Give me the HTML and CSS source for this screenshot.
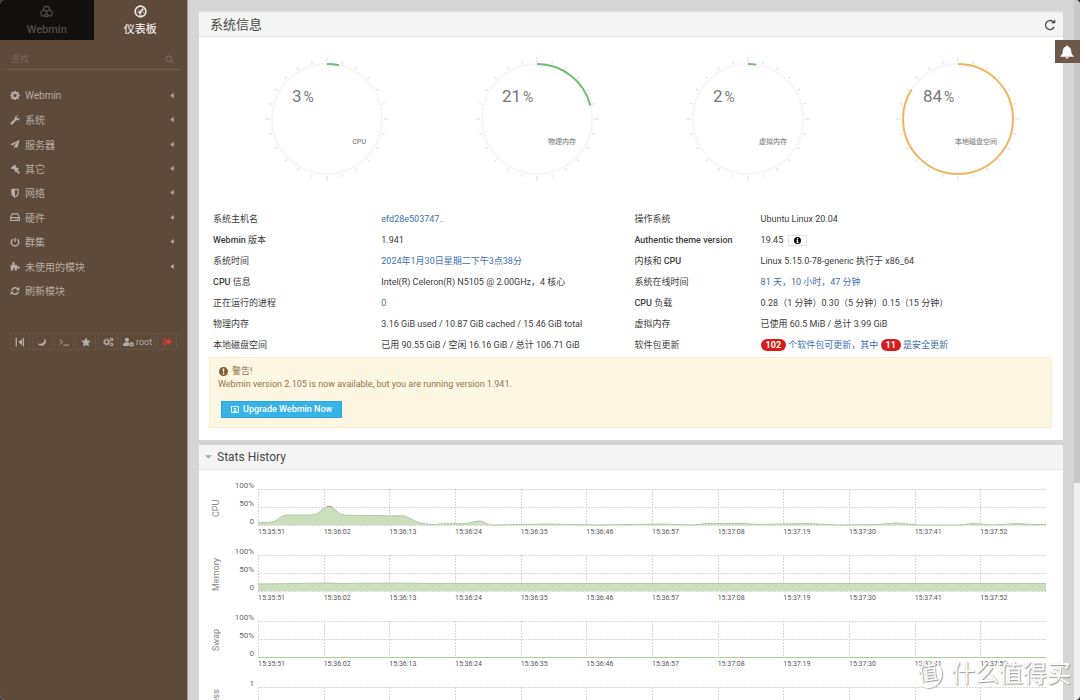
FILE: index.html
```html
<!DOCTYPE html>
<html lang="zh-CN">
<head>
<meta charset="utf-8">
<title>Webmin</title>
<link rel="stylesheet" href="styles.css">
</head>
<body>
<svg class="defs" aria-hidden="true">
  <defs>
    <symbol id="caret" viewBox="0 0 4 6"><path d="M4 0v6L0 3z"/></symbol>
    <symbol id="dial" viewBox="-63 -63 126 126">
      <circle r="55" fill="none" stroke="#f6f6f6" stroke-width="2"/>
      <g stroke="#ddd" stroke-width="1">
        <g id="quarter">
          <path d="M0-57v-5"/>
          <path d="M0-57v-3" transform="rotate(15)"/><path d="M0-57v-3" transform="rotate(30)"/>
          <path d="M0-57v-3" transform="rotate(45)"/><path d="M0-57v-3" transform="rotate(60)"/>
          <path d="M0-57v-3" transform="rotate(75)"/>
        </g>
        <use href="#quarter" transform="rotate(90)"/>
        <use href="#quarter" transform="rotate(180)"/>
        <use href="#quarter" transform="rotate(270)"/>
      </g>
    </symbol>
    <g id="grid" fill="none" stroke="#d6d6d6" stroke-dasharray="2 1">
      <path d="M0 .5h788M0 18.5h788M0 36.5h788"/>
      <path d="M.5 0v36M66.500 0v36M131.500 0v36M197.500 0v36M263.500 0v36M328.500 0v36M394.500 0v36M460.500 0v36M525.500 0v36M591.500 0v36M657.500 0v36M722.500 0v36"/>
    </g>
  </defs>
</svg>
<div class="app">
  <aside class="sidebar">
    <div class="tabs">
      <a class="tab" href="#webmin">
        <svg class="tab-icon" viewBox="0 0 16 16" fill="none" stroke="currentColor" stroke-width="1.500"><path d="M5 6C3.500 2.500 6 .8 8 2.500 10 .8 12.500 2.500 11 6M5 6C2 6 .3 9.500 1.500 12c.8 2 3.500 2 4.500.5M11 6c3 0 4.700 3.500 3.500 6-.8 2-3.500 2-4.500.5M6 12.500c.3 2.300 3.700 2.300 4 0M5 6l3 2 3-2M8 8v2M8 10l-2 2.500M8 10l2 2.500"/></svg>
        <span>Webmin</span>
      </a>
      <a class="tab active" href="#dashboard">
        <svg class="tab-icon" viewBox="0 0 16 16" fill="none" stroke="currentColor"><circle cx="8" cy="8" r="6.600" stroke-width="2"/><path d="M7.500 8.700L11.500 4.500" stroke-width="2"/><circle cx="7.300" cy="9" r="1.500" fill="currentColor"/><path d="M3.500 8.500h1M5 5l.7.7M11 9h1.500M6 12.500h4" stroke-width="1.200"/></svg>
        <span>仪表板</span>
      </a>
    </div>
    <label class="search">
      <input type="search" placeholder="查找" aria-label="查找">
      <svg class="icon" viewBox="0 0 16 16" fill="none" stroke="currentColor" stroke-width="1.700"><circle cx="7" cy="7" r="5.300"/><path d="M11 11l4 4"/></svg>
    </label>
    <nav class="menu">
      <a href="#1"><svg class="icon" viewBox="0 0 16 16"><path fill-rule="evenodd" d="M6.800 1h2.400l.4 2 1.400.6 1.700-1.200 1.700 1.700-1.200 1.700.6 1.400 2 .4v2.400l-2 .4-.6 1.200 1.200 1.700-1.700 1.700-1.700-1.200-1.400.6-.4 2H6.800l-.4-2-1.400-.6-1.700 1.200-1.700-1.700 1.200-1.700L2.200 10.400l-2-.4V7.600l2-.4.6-1.400-1.200-1.700 1.700-1.700L5 3.600 6.400 3zM8 6a2.600 2.600 0 100 5.200A2.600 2.600 0 008 6z"/></svg><span>Webmin</span><svg class="caret"><use href="#caret"/></svg></a>
      <a href="#2"><svg class="icon" viewBox="0 0 16 16"><path d="M15.300 4.200l-2.700 1.500-1.900-1.100V2.500L13.400 1C10.500-.2 7 2 7.700 5.800L1 12.200c-1.800 2 .9 4.400 2.800 2.800l6.400-6.700c3.600.8 5.900-1.600 5.100-4.100z"/></svg><span>系统</span><svg class="caret"><use href="#caret"/></svg></a>
      <a href="#3"><svg class="icon" viewBox="0 0 16 16"><path d="M15.500 1L.5 8.500l4 2L12 4.500l-5.500 7V15l2.300-2.400 3.200 1.400z"/></svg><span>服务器</span><svg class="caret"><use href="#caret"/></svg></a>
      <a href="#4"><svg class="icon" viewBox="0 0 16 16"><path d="M7.500.8l1.700 1.700-.5 1.200 3 3 1.200-.5 1.600 1.600-5.500 5.500-1.600-1.600.5-1.200-3-3-1.200.5L.8 6.800zM12 10l4 3.600-2.300 2.300L10 12z"/></svg><span>其它</span><svg class="caret"><use href="#caret"/></svg></a>
      <a href="#5"><svg class="icon" viewBox="0 0 16 16"><path fill-rule="evenodd" d="M2 1h12v7c0 3.500-2.500 5.700-6 7.500C4.500 13.700 2 11.500 2 8zm6 2v10c2.500-1.400 4-3 4-5V3z"/></svg><span>网络</span><svg class="caret"><use href="#caret"/></svg></a>
      <a href="#6"><svg class="icon" viewBox="0 0 16 16" fill="none" stroke="currentColor" stroke-width="1.800"><path d="M1 9l2.500-6h9L15 9v4.500H1zM1 9h14M9 11.300h1.200M11.800 11.300H13"/></svg><span>硬件</span><svg class="caret"><use href="#caret"/></svg></a>
      <a href="#7"><svg class="icon" viewBox="0 0 16 16" fill="none" stroke="currentColor" stroke-width="2.200"><path d="M4.500 3.500a6 6 0 107 0M8 1v7"/></svg><span>群集</span><svg class="caret"><use href="#caret"/></svg></a>
      <a href="#8"><svg class="icon" viewBox="0 0 16 16"><path d="M1 6h3.500C3 2.500 4 1 5.500 1S8 2.500 6.800 6H11v3.300c1.500-1 4.500-1.300 4.500 1.200s-3 2.200-4.500 1.200V15H7.500c1-2.500.3-3.500-1-3.500s-2 1-1 3.500H1z"/></svg><span>未使用的模块</span><svg class="caret"><use href="#caret"/></svg></a>
      <a href="#9"><svg class="icon" viewBox="0 0 16 16"><path d="M1.500 7a6.500 6.500 0 0111-3.500L15 1.500V7H9.500l1.700-1.700A4 4 0 004.200 7zM14.500 9a6.500 6.500 0 01-11 3.500L1 14.500V9h5.500l-1.700 1.700A4 4 0 0011.800 9z"/></svg><span>刷新模块</span></a>
    </nav>
    <div class="tools">
      <button aria-label="收起"><svg class="icon" viewBox="0 0 16 16"><path d="M1 1h2v14H1zM12.500 1h2v14h-2zM11.500 3v10L5 8z"/></svg></button>
      <button aria-label="夜间"><svg class="icon" viewBox="0 0 16 16"><path d="M12 2c5 5 1 12-5 12-3 0-5-1.500-6-3.500 7 2.500 11.500-2 11-8.500z"/></svg></button>
      <button aria-label="终端"><svg class="icon" viewBox="0 0 16 16" fill="none" stroke="currentColor" stroke-width="1.500"><path d="M1 4l4.500 4L1 12M7 13h9"/></svg></button>
      <button aria-label="收藏"><svg class="icon" viewBox="0 0 16 16"><path d="M8 .5l2.300 4.900 5.300.7-3.900 3.700 1 5.400L8 12.600l-4.700 2.600 1-5.400L.4 6.100l5.300-.7z"/></svg></button>
      <button aria-label="设置"><svg class="icon wide" viewBox="0 0 18 16" fill="none" stroke="currentColor"><circle cx="6" cy="8" r="3.500" stroke-width="2.400"/><circle cx="6" cy="8" r="5.200" stroke-width="1.500" stroke-dasharray="2 2.080"/><circle cx="14" cy="4" r="2" stroke-width="1.800"/><circle cx="14" cy="12" r="2" stroke-width="1.800"/></svg></button>
      <button><svg class="icon wide" viewBox="0 0 18 16"><circle cx="6.500" cy="4.500" r="3.500"/><path d="M0 14c0-4 2-5.500 6.500-5.500 2 0 3 .3 3.800 1-1 1.500-1 3.500 0 5H0z"/><path fill-rule="evenodd" d="M14 8a3.800 3.800 0 100 7.600A3.800 3.800 0 0014 8zm0 2.500a1.300 1.300 0 110 2.600 1.300 1.300 0 010-2.600z"/></svg>root</button>
      <button class="logout" aria-label="退出"><svg class="icon" viewBox="0 0 16 16"><path d="M6 2v2H3v8h3v2H2.500Q1 14 1 12.500v-9Q1 2 2.500 2zM9 2L16 8 9 14V11H5V5h4z"/></svg></button>
    </div>
  </aside>

  <main class="content">
    <section class="panel info">
      <header class="panel-head top">
        <h1>系统信息</h1>
        <button class="refresh" aria-label="刷新"><svg viewBox="0 0 16 16" fill="none" stroke="currentColor" stroke-width="1.700"><path d="M13.500 10.500A6 6 0 1112 3.500"/><path d="M10.300 5.300h4.200V1.200z" fill="currentColor" stroke-width="1"/></svg></button>
      </header>
      <div class="dials">
        <svg class="dial" viewBox="-63 -63 126 126"><use href="#dial" x="-63" y="-63" width="126" height="126"/><circle class="arc green" r="55" pathLength="100" stroke-dasharray="3.500 100"/><text class="num" x="-35" y="-17">3<tspan class="pct" dx="2">%</tspan></text><text class="cap" x="39" y="25">CPU</text></svg>
        <svg class="dial" viewBox="-63 -63 126 126"><use href="#dial" x="-63" y="-63" width="126" height="126"/><circle class="arc green" r="55" pathLength="100" stroke-dasharray="21 100"/><text class="num" x="-35" y="-17">21<tspan class="pct" dx="2">%</tspan></text><text class="cap" x="39" y="25">物理内存</text></svg>
        <svg class="dial" viewBox="-63 -63 126 126"><use href="#dial" x="-63" y="-63" width="126" height="126"/><circle class="arc green" r="55" pathLength="100" stroke-dasharray="2.400 100"/><text class="num" x="-35" y="-17">2<tspan class="pct" dx="2">%</tspan></text><text class="cap" x="39" y="25">虚拟内存</text></svg>
        <svg class="dial" viewBox="-63 -63 126 126"><use href="#dial" x="-63" y="-63" width="126" height="126"/><circle class="arc orange" r="55" pathLength="100" stroke-dasharray="84 100"/><text class="num" x="-35" y="-17">84<tspan class="pct" dx="2">%</tspan></text><text class="cap" x="39" y="25">本地磁盘空间</text></svg>
      </div>
      <table class="facts">
        <tr><th>系统主机名</th><td><a href="#host">efd28e503747..</a></td><th>操作系统</th><td>Ubuntu Linux 20.04</td></tr>
        <tr><th><b>Webmin</b> 版本</th><td>1.941</td><th><b>Authentic theme version</b></th><td>19.45 <button class="tip" aria-label="信息"><svg viewBox="0 0 16 16"><path fill-rule="evenodd" d="M8 0a8 8 0 100 16A8 8 0 008 0zM6.500 2.500h3v2.700h-3zM5.500 6.500h4v5h1.200v2H5.500v-2h1.200v-3H5.500z"/></svg></button></td></tr>
        <tr><th>系统时间</th><td><a href="#time">2024年1月30日星期二下午3点38分</a></td><th>内核和 <b>CPU</b></th><td>Linux 5.15.0-78-generic 执行于 x86_64</td></tr>
        <tr><th><b>CPU</b> 信息</th><td>Intel(R) Celeron(R) N5105 @ 2.00GHz，4 核心</td><th>系统在线时间</th><td><a href="#up">81 天，10 小时，47 分钟</a></td></tr>
        <tr><th>正在运行的进程</th><td><a href="#proc">0</a></td><th><b>CPU</b> 负载</th><td>0.28（1 分钟）0.30（5 分钟）0.15（15 分钟）</td></tr>
        <tr><th>物理内存</th><td>3.16 GiB used / 10.87 GiB cached / 15.46 GiB total</td><th>虚拟内存</th><td>已使用 60.5 MiB / 总计 3.99 GiB</td></tr>
        <tr><th>本地磁盘空间</th><td>已用 90.55 GiB / 空闲 16.16 GiB / 总计 106.71 GiB</td><th>软件包更新</th><td><a href="#pkg"><span class="badge">102</span> 个软件包可更新，其中 <span class="badge">11</span> 是安全更新</a></td></tr>
      </table>
      <div class="alert">
        <p class="alert-title"><svg viewBox="0 0 16 16"><path fill-rule="evenodd" d="M8 0a8 8 0 100 16A8 8 0 008 0zM6.500 2.500h3L9 9.500H7zM6.700 10.800h2.600v2.500H6.700z"/></svg>警告!</p>
        <p>Webmin version 2.105 is now available, but you are running version 1.941.</p>
        <button class="upgrade"><svg viewBox="0 0 16 14" fill="none" stroke="currentColor" stroke-width="1.800"><path d="M1 1h14v12H1zM8 11V4M5.500 6.500L8 4l2.500 2.500M4 10.500h8"/></svg>Upgrade Webmin Now</button>
      </div>
    </section>

    <section class="panel stats">
      <header class="panel-head"><svg class="fold" viewBox="0 0 8 4"><path d="M0 0h8L4 4z"/></svg><h2>Stats History</h2></header>
      <div class="charts">
        <div class="chart">
          <div class="name"><span>CPU</span></div>
          <div class="scale"><span>100%</span><span>50%</span><span>0</span></div>
          <div class="plot">
            <svg viewBox="0 0 788 37" preserveAspectRatio="none">
              <path class="area" d="M0 36V34C6 33 10 34 14 33C20 32 22 26 29 26H54C62 26 64 17.500 71 17.500C78 17.500 78 25 86 26C100 27 120 26 130 27C140 26.500 146 27 147 27C154 29 156 35 176 35.500C190 34 200 35 206 34.500C213 34 216 32 222 32C228 33 228 36 236 36L290 35L340 36L403 35L435 36L450 34.500L485 34.500L500 35.500L550 34.500L580 36L620 35.500L638 34L660 36L700 36L715 34.500L735 36L758 34.500L775 35.500H788V36z"/>
              <use href="#grid"/>
              <path class="line" d="M0 34C6 33 10 34 14 33C20 32 22 26 29 26H54C62 26 64 17.500 71 17.500C78 17.500 78 25 86 26C100 27 120 26 130 27C140 26.500 146 27 147 27C154 29 156 35 176 35.500C190 34 200 35 206 34.500C213 34 216 32 222 32C228 33 228 36 236 36L290 35L340 36L403 35L435 36L450 34.500L485 34.500L500 35.500L550 34.500L580 36L620 35.500L638 34L660 36L700 36L715 34.500L735 36L758 34.500L775 35.500H788"/>
              <path class="peak" d="M69 17.500h5"/>
            </svg>
            <div class="times"><span>15:35:51</span><span>15:36:02</span><span>15:36:13</span><span>15:36:24</span><span>15:36:35</span><span>15:36:46</span><span>15:36:57</span><span>15:37:08</span><span>15:37:19</span><span>15:37:30</span><span>15:37:41</span><span>15:37:52</span></div>
          </div>
        </div>
        <div class="chart">
          <div class="name"><span>Memory</span></div>
          <div class="scale"><span>100%</span><span>50%</span><span>0</span></div>
          <div class="plot">
            <svg viewBox="0 0 788 37" preserveAspectRatio="none">
              <path class="area" d="M0 36V29L70 28L86 28.500L132 28L180 28.500H788V36z"/>
              <use href="#grid"/>
              <path class="line" d="M0 29L70 28L86 28.500L132 28L180 28.500H788"/>
            </svg>
            <div class="times"><span>15:35:51</span><span>15:36:02</span><span>15:36:13</span><span>15:36:24</span><span>15:36:35</span><span>15:36:46</span><span>15:36:57</span><span>15:37:08</span><span>15:37:19</span><span>15:37:30</span><span>15:37:41</span><span>15:37:52</span></div>
          </div>
        </div>
        <div class="chart">
          <div class="name"><span>Swap</span></div>
          <div class="scale"><span>100%</span><span>50%</span><span>0</span></div>
          <div class="plot">
            <svg viewBox="0 0 788 37" preserveAspectRatio="none">
              <use href="#grid"/>
              <path class="line" d="M0 36.500H788"/>
            </svg>
            <div class="times"><span>15:35:51</span><span>15:36:02</span><span>15:36:13</span><span>15:36:24</span><span>15:36:35</span><span>15:36:46</span><span>15:36:57</span><span>15:37:08</span><span>15:37:19</span><span>15:37:30</span><span>15:37:41</span><span>15:37:52</span></div>
          </div>
        </div>
        <div class="chart">
          <div class="name"><span>Process</span></div>
          <div class="scale"><span>1</span></div>
          <div class="plot">
            <svg viewBox="0 0 788 37" preserveAspectRatio="none"><use href="#grid"/></svg>
          </div>
        </div>
      </div>
    </section>
  </main>

  <button class="bell" aria-label="通知"><svg viewBox="0 0 16 16"><path d="M8 .5c.8 0 1.200.5 1.200 1.200C12 2.500 12.800 5 13 8c.1 2 1 3.300 2.500 4.500v.8H.5v-.8C2 11.300 2.900 10 3 8c.2-3 1-5.500 3.800-6.300C6.800 1 7.200.5 8 .5zM6 14h4c-.3 2-3.700 2-4 0z"/></svg></button>
  <div class="scrollbar"><div class="thumb"></div></div>
  <div class="watermark"><span class="seal">值</span><span>什么值得买</span></div>
</div>
</body>
</html>
```

FILE: styles.css
```css
* { box-sizing: border-box; }

html { background: #3a3a3a; }

body {
  margin: 0;
  font-family: Roboto, "Noto Sans CJK SC", sans-serif;
  font-size: 9px;
  color: #3c3c3c;
}

a { color: inherit; text-decoration: none; }
button { font: inherit; color: inherit; cursor: pointer; }
h1, h2, p { margin: 0; font-weight: 400; }
svg { display: block; flex: none; }
.defs { position: absolute; width: 0; height: 0; }
.icon { width: 10px; height: 10px; fill: currentColor; }
.icon[fill="none"] { fill: none; }

.app {
  position: relative;
  display: flex;
  height: 100vh;
  overflow: hidden;
  border-radius: 5px;
  background: #d5d5d5;
}

/* Sidebar */
.sidebar {
  flex: none;
  width: 188px;
  background: #5d4a3b;
  border-right: 1px solid #a1978f;
  color: #b5aca5;
  font-size: 10px;
}
.tabs { display: flex; }
.tab {
  flex: 1;
  display: flex;
  flex-direction: column;
  align-items: center;
  gap: 4px;
  height: 40px;
  padding-top: 5px;
  line-height: 16px;
  font-size: 11px;
  font-weight: 500;
  color: #514e4b;
  background: #12110f;
}
.tab.active { color: #ebe8e6; background: none; }
.tab-icon { width: 13px; height: 13px; }

.search {
  display: flex;
  align-items: center;
  height: 21px;
  margin: 9px 7px 0;
  padding: 0 6px 0 4px;
  border-bottom: 1px solid #71604f;
  color: #7d6d5f;
}
.search .icon { width: 9px; height: 9px; }
.search input {
  flex: 1;
  min-width: 0;
  padding: 0;
  border: 0;
  outline: 0;
  background: none;
  font: inherit;
  font-size: 9px;
}
.search input::placeholder { color: #746456; }

.menu {
  display: grid;
  grid-auto-rows: 1fr;
  min-height: 220px;
  margin-top: 13px;
}
.menu a { display: flex; align-items: center; padding: 0 13px 0 10px; }
.menu span { flex: 1; padding-left: 5px; }
.caret { width: 4px; height: 5px; fill: currentColor; }

.tools { display: flex; gap: 2px; padding: 30px 10px 0; }
.tools button {
  display: flex;
  align-items: center;
  justify-content: center;
  gap: 2px;
  min-width: 20px;
  height: 17px;
  padding: 0 3px;
  border: 1px solid #66533f;
  background: none;
  font-size: 9px;
}
.tools .icon.wide { width: 11px; }
.tools .logout { color: #de3838; }
.tools .logout .icon { width: 9px; height: 9px; }

/* Panels */
.content { flex: 1; min-width: 0; padding: 11px 17px 0 11px; }
.panel { background: #fff; }
.panel + .panel { margin-top: 5px; }
.panel-head {
  display: flex;
  align-items: center;
  height: 25px;
  padding: 0 6px;
  background: #f4f4f4;
  border-bottom: 1px solid #e6e6e6;
  color: #484848;
}
.panel-head.top { height: 26px; padding: 0 7px 0 11px; border-top: 2px solid #e8e8e8; }
.panel-head h1 { flex: 1; font-size: 13px; line-height: 20px; }
.panel-head h2 { font-size: 12px; line-height: 20px; }
.refresh { padding: 0; border: 0; background: none; }
.refresh svg { width: 12px; height: 12px; }
.fold { width: 7px; height: 4px; margin-right: 5px; fill: #aaa; }

.info { padding-bottom: 12px; }
.dials { display: grid; grid-template-columns: repeat(4, 1fr); justify-items: center; padding: 19px 0 0 23px; }
.dial { width: 126px; height: 126px; }
.arc { fill: none; stroke-width: 2; transform: rotate(-90deg); }
.green { stroke: #6cc070; }
.orange { stroke: #f3b45f; }
.num { font-size: 17px; fill: #777; }
.pct { font-size: 14px; }
.cap { font-size: 7px; font-weight: 500; text-anchor: end; fill: #888; }

.facts {
  width: 100%;
  margin-top: 26px;
  border-spacing: 0;
  table-layout: fixed;
  line-height: 14px;
}
.facts th, .facts td { height: 21px; padding: 0; text-align: left; white-space: nowrap; }
.facts th { font-weight: 400; }
.facts b { font-weight: 500; }
.facts th:first-child { width: 21.1%; padding-left: 14px; }
.facts td:nth-child(2) { width: 29.3%; }
.facts th:nth-child(3) { width: 14.6%; }
.facts a { color: #4070ae; }
.tip { width: 19px; height: 11px; margin-left: 3px; padding: 0; border: 1px solid #e2e2e2; background: #fff; vertical-align: middle; }
.tip svg { width: 7px; height: 7px; margin: 0 auto; }
.badge {
  display: inline-block;
  padding: 0 5px;
  border-radius: 6px;
  background: #d81b1b;
  color: #fff;
  font-weight: 700;
  line-height: 12px;
}

.alert {
  margin: 2px 11px 0 10px;
  padding: 7px 8px 9px;
  border: 1px solid #f8eed0;
  background: #fdf6e2;
  color: #8f744a;
  line-height: 13px;
}
.alert-title { display: flex; align-items: center; gap: 4px; padding-left: 1px; }
.alert-title svg { width: 9px; height: 9px; fill: #7d5f2e; }
.upgrade {
  display: flex;
  align-items: center;
  gap: 4px;
  height: 17px;
  margin: 10px 0 0 3px;
  padding: 0 9px;
  border: 1px solid #2aa5d8;
  background: #37b3e6;
  color: #fff;
  font-weight: 500;
}
.upgrade svg { width: 8px; height: 7px; }

/* Charts */
.charts { padding: 7px 17px 0 10px; }
.chart { display: grid; grid-template-columns: 14px 30px 1fr; column-gap: 4px; height: 66px; }
.chart .plot { margin-left: -3px; }
.name { display: flex; justify-content: center; height: 62px; font-size: 9px; color: #888; }
.name span { writing-mode: vertical-rl; transform: rotate(180deg); text-align: center; line-height: 14px; }
.scale { display: flex; flex-direction: column; text-align: right; font-size: 8px; line-height: 18px; color: #666; padding-right: 3px; }
.plot { padding-top: 12px; min-width: 0; }
.plot svg { width: 100%; height: 37px; }
.times { display: grid; grid-template-columns: repeat(12, 1fr); font-size: 7px; line-height: 13px; color: #555; }
.area { fill: #cbdebd; }
.line { fill: none; stroke: #afcd9c; }
.peak { fill: none; stroke: #e0897a; }

/* Overlays */
.bell {
  position: absolute;
  z-index: 1;
  top: 40px;
  right: 0;
  width: 25px;
  height: 23px;
  padding: 0 5px;
  border: 0;
  background: #6e5849;
}
.bell svg { width: 14px; height: 14px; fill: #fff; }
.scrollbar { position: absolute; top: 0; right: 0; bottom: 0; width: 6px; background: #f0f0f0; }
.thumb { height: 69%; background: #c9c9c9; }
.watermark {
  position: absolute;
  right: 9px;
  bottom: 10px;
  display: flex;
  align-items: center;
  gap: 9px;
  font-size: 24px;
  line-height: 32px;
  color: #fff;
  text-shadow: 1px 1px 1px #999, 0 0 1px #bbb;
}
.seal {
  width: 28px;
  height: 28px;
  border: 1px solid #fff;
  border-radius: 50%;
  box-shadow: 1px 1px 1px #aaa;
  font-size: 20px;
  line-height: 24px;
  text-align: center;
  transform: rotate(-8deg);
}
```
